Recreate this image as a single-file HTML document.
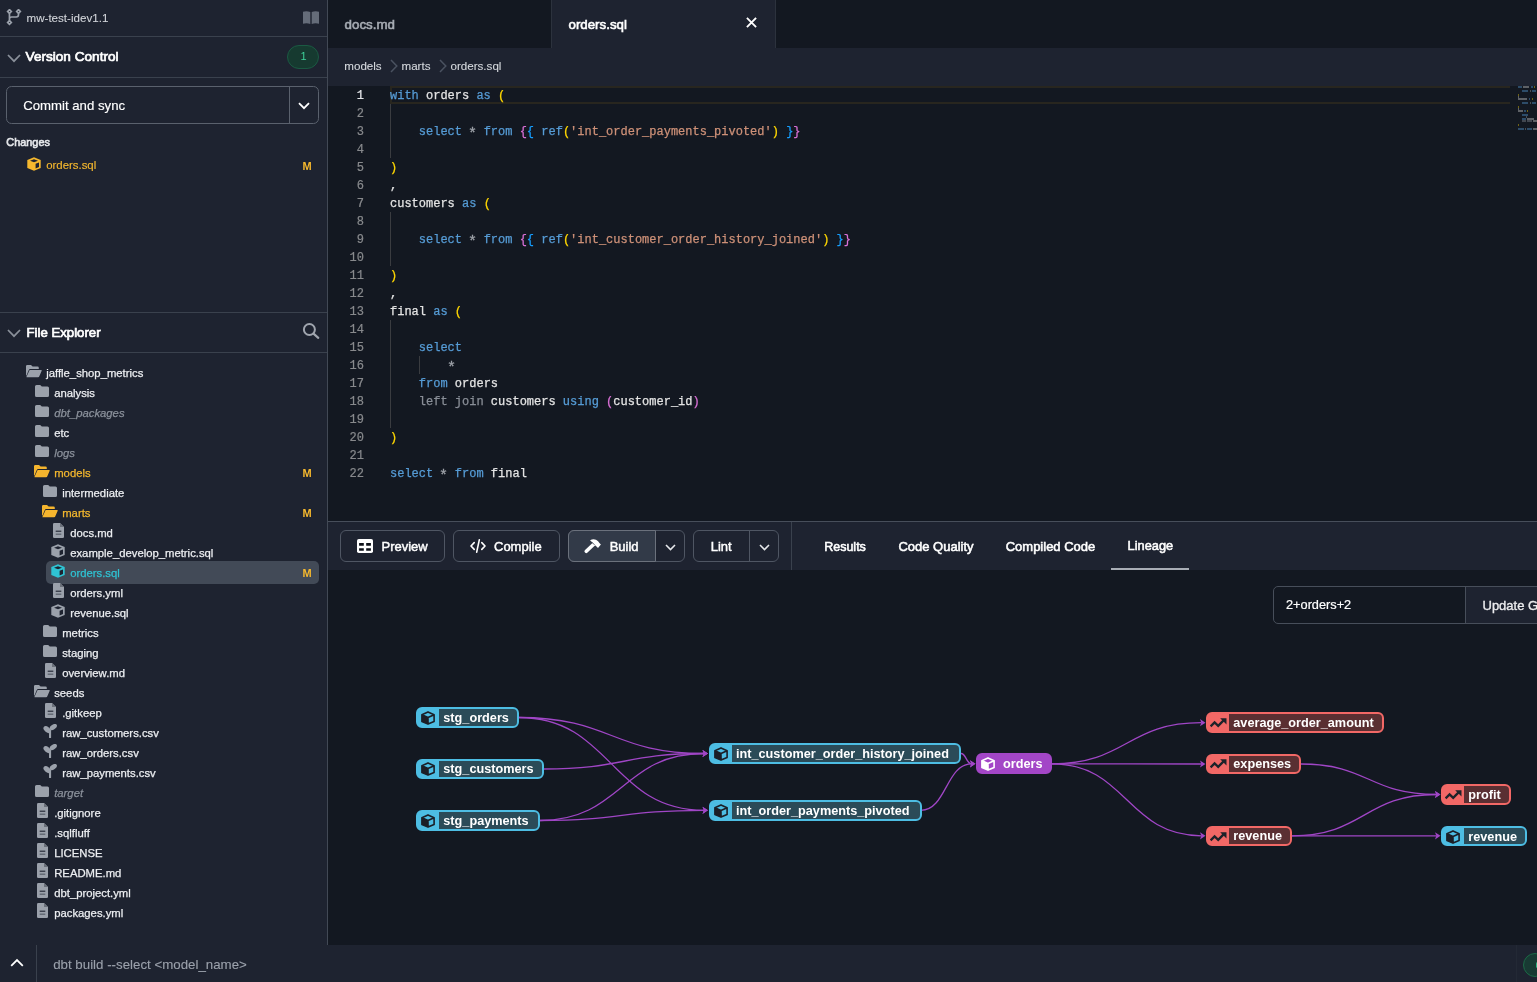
<!DOCTYPE html><html><head><meta charset="utf-8"><style>
*{box-sizing:border-box;margin:0;padding:0}
html,body{width:1537px;height:982px;overflow:hidden;background:#131821;font-family:"Liberation Sans",sans-serif;color:#e6e8eb}
.abs{position:absolute}
#root{position:absolute;left:0;top:0;width:1537px;height:982px;will-change:transform}
.t{position:absolute;white-space:nowrap;line-height:1}
.hline{position:absolute;height:1px;background:#3a414d}
.tr{font-size:12px}
.mk{font-size:11px;font-weight:bold;color:#f5b82e}
.ic{position:absolute;display:block}
.code{position:absolute;font-family:"Liberation Mono",monospace;font-size:12px;white-space:pre;line-height:1;-webkit-text-stroke:0.25px currentColor}
.code span{-webkit-text-stroke:0.25px currentColor}
.ast{display:inline-block;transform:translateY(2.6px) scale(1.25)}
.ln{position:absolute;font-family:"Liberation Mono",monospace;font-size:12px;line-height:1;text-align:right;width:30px;color:#858b94;-webkit-text-stroke:0.2px currentColor}
.k{color:#569cd6}.w{color:#e4e4e4}.y{color:#ffd700}.p{color:#da70d6}.b{color:#179fff}.s{color:#ce9178}.g{color:#8a8f98}.st{color:#a0a4ab}
.btn{position:absolute;border:1px solid #4d5461;border-radius:6px;background:#1e2330}
.node{position:absolute;height:21px;border-radius:6px;border:2.2px solid}
.node .nb{position:absolute;left:20.8px;top:0;bottom:0;right:0;border-radius:0 4px 4px 0}
.node .nt{position:absolute;left:25px;top:3px;font-size:12.7px;font-weight:bold;color:#fff;white-space:nowrap;line-height:1}
.node svg{position:absolute;left:2px;top:1px}
</style></head><body><div id="root">
<svg width="0" height="0" style="position:absolute">
<defs>
<symbol id="i-folder" viewBox="0 0 14 12"><path d="M1.5 0H5.2L6.8 1.6H12.5Q14 1.6 14 3.1V10.5Q14 12 12.5 12H1.5Q0 12 0 10.5V1.5Q0 0 1.5 0Z" fill="#9ba1ab"/></symbol>
<symbol id="i-fopen" viewBox="0 0 16 12.5"><path d="M1.3 0H5L6.6 1.5H11.5Q12.8 1.5 12.8 2.8V4H4.2Q3.2 4 2.8 4.9L0.6 10.2L0 10.8V1.3Q0 0 1.3 0Z M3.6 5H15.2Q16 5 15.7 5.8L13.2 11.6Q12.8 12.5 11.8 12.5H0.8Q0.2 12.5 0.5 11.8Z" fill="currentColor"/></symbol>
<symbol id="i-file" viewBox="0 0 11 15"><path d="M1.3 0H7L11 4V13.7Q11 15 9.7 15H1.3Q0 15 0 13.7V1.3Q0 0 1.3 0Z" fill="#9ba1ab"/><path d="M7 0V4H11" fill="#6b717b"/><path d="M2.7 8.2H8.3" stroke="#1e2330" stroke-width="1.1"/><path d="M2.7 11.2H8.3" stroke="#5d636e" stroke-width="1.3"/></symbol>
<symbol id="i-cube" viewBox="0 0 14 14"><path d="M7 0.3L13.7 2.9V11.1L7 13.7L0.3 11.1V2.9Z" fill="currentColor"/><path d="M7 2.2L11 3.7L7 5.2L3 3.7Z M8.6 6.7L12 5.4V10L8.6 11.4Z" fill="#1e2330"/></symbol>
<symbol id="i-seed" viewBox="0 0 14 14"><g fill="#9ba1ab"><ellipse cx="4.2" cy="5.6" rx="4.3" ry="2.6" transform="rotate(38 4.2 5.6)"/><ellipse cx="10.3" cy="3" rx="4" ry="2.4" transform="rotate(-34 10.3 3)"/><rect x="6" y="5.5" width="2.1" height="8.5" rx="0.6"/></g></symbol>
<symbol id="n-cube" viewBox="0 0 14 14"><path d="M1 3.7L7 6.4V13.1L1 10.4Z" fill="currentColor"/><path d="M7 0.9L13.1 3.7V10.4L7 13.1L0.9 10.4V3.7Z M0.9 3.7L7 6.4L13.1 3.7M7 6.4V13.1" fill="none" stroke="currentColor" stroke-width="1.6" stroke-linejoin="round"/></symbol>
<symbol id="n-metric" viewBox="0 0 17 10"><path d="M1.4 7.6L4.6 4.4L8.2 7.8L13 3" fill="none" stroke="#1e2229" stroke-width="2.3" stroke-linecap="square"/><path d="M10.2 0.3H16.5V6.6Z" fill="#1e2229"/></symbol>
</defs></svg>
<div class="abs" style="left:0;top:0;width:327px;height:945px;background:#1e2330"></div>
<div class="abs" style="left:327px;top:0;width:1px;height:945px;background:#424955"></div>
<svg class="abs" style="left:6px;top:9px" width="16" height="17" viewBox="0 0 16 17">
    <g fill="none" stroke="#9ba1ab" stroke-width="1.7">
      <path d="M3.45 0.7L5.3 2.5L3.45 4.3L1.65 2.5Z M12.5 0.7L14.3 2.5L12.5 4.3L10.7 2.5Z M3.45 11.7L5.3 13.5L3.45 15.3L1.65 13.5Z"/>
      <path d="M3.45 4.3V11.7M12.5 4.3V5.8Q12.5 8 10.3 8H5.6Q3.45 8 3.45 10.2"/>
    </g></svg>
<div class="t" style="left:26.5px;top:12.48px;font-size:11.6px;color:#d2d5da;-webkit-text-stroke:0.1px #d2d5da;">mw-test-idev1.1</div>
<svg class="abs" style="left:303px;top:11px" width="16" height="13" viewBox="0 0 16 13"><path d="M0 0.8Q3.5 -0.4 7.3 1V13Q3.5 11.6 0 12.8Z M8.7 1Q12.5 -0.4 16 0.8V12.8Q12.5 11.6 8.7 13Z" fill="#656c79"/></svg>
<div class="hline" style="left:0;top:36px;width:327px"></div>
<svg class="abs" style="left:7px;top:54px" width="14" height="9" viewBox="0 0 14 9"><path d="M1 1L7 7.2L13 1" fill="none" stroke="#8a909a" stroke-width="1.7"/></svg>
<div class="t" style="left:25.6px;top:50.29px;font-size:13.6px;color:#fff;-webkit-text-stroke:0.7px #fff;">Version Control</div>
<div class="abs" style="left:287px;top:45px;width:32px;height:24px;border-radius:12px;background:#163a30;border:1px solid #1b5a43"></div>
<div class="t" style="left:300.5px;top:51.49px;font-size:11px;color:#3ed19a;">1</div>
<div class="hline" style="left:0;top:77px;width:327px"></div>
<div class="abs" style="left:6px;top:86px;width:313px;height:38px;border:1px solid #5a616d;border-radius:5.5px"></div>
<div class="abs" style="left:289px;top:87px;width:1px;height:36px;background:#5a616d"></div>
<div class="t" style="left:23.2px;top:99.03px;font-size:13.2px;color:#fff;-webkit-text-stroke:0.15px #fff;">Commit and sync</div>
<svg class="abs" style="left:298px;top:102px" width="12" height="8" viewBox="0 0 12 8"><path d="M1 1.2L6 6.2L11 1.2" fill="none" stroke="#fff" stroke-width="1.8"/></svg>
<div class="t" style="left:6.3px;top:136.57px;font-size:10.9px;color:#e6e8eb;-webkit-text-stroke:0.6px #e6e8eb;">Changes</div>
<svg class="ic" style="left:27px;top:157px;color:#f5b82e" width="14" height="14"><use href="#i-cube"/></svg>
<div class="t" style="left:46.2px;top:160.15px;font-size:11.4px;color:#f5b82e;-webkit-text-stroke:0.15px #f5b82e;">orders.sql</div>
<div class="t" style="left:302.6px;top:160.59px;font-size:11px;color:#f5b82e;font-weight:bold;">M</div>
<div class="hline" style="left:0;top:312px;width:327px"></div>
<svg class="abs" style="left:7px;top:329px" width="14" height="9" viewBox="0 0 14 9"><path d="M1 1L7 7.2L13 1" fill="none" stroke="#8a909a" stroke-width="1.7"/></svg>
<div class="t" style="left:26.5px;top:325.63px;font-size:13.2px;color:#fff;-webkit-text-stroke:0.7px #fff;">File Explorer</div>
<svg class="abs" style="left:302px;top:322px" width="18" height="18" viewBox="0 0 18 18"><circle cx="7.4" cy="7.5" r="5.5" fill="none" stroke="#a0a5ae" stroke-width="2"/><path d="M11.5 11.6L16.3 15.9" stroke="#a0a5ae" stroke-width="2.1" stroke-linecap="round"/></svg>
<div class="hline" style="left:0;top:352px;width:327px"></div>
<svg class="ic" style="left:26px;top:365px;color:#9ba1ab" width="16" height="12.5"><use href="#i-fopen"/></svg>
<div class="t" style="left:46.2px;top:368.23px;font-size:11.3px;color:#eceef1;-webkit-text-stroke:0.25px #eceef1;">jaffle_shop_metrics</div>
<svg class="ic" style="left:35px;top:385px" width="14" height="12"><use href="#i-folder"/></svg>
<div class="t" style="left:54.2px;top:388.23px;font-size:11.3px;color:#eceef1;-webkit-text-stroke:0.25px #eceef1;">analysis</div>
<svg class="ic" style="left:35px;top:405px" width="14" height="12"><use href="#i-folder"/></svg>
<div class="t" style="left:54.2px;top:408.23px;font-size:11.3px;color:#8b919b;-webkit-text-stroke:0.25px #8b919b;font-style:italic;">dbt_packages</div>
<svg class="ic" style="left:35px;top:425px" width="14" height="12"><use href="#i-folder"/></svg>
<div class="t" style="left:54.2px;top:428.23px;font-size:11.3px;color:#eceef1;-webkit-text-stroke:0.25px #eceef1;">etc</div>
<svg class="ic" style="left:35px;top:445px" width="14" height="12"><use href="#i-folder"/></svg>
<div class="t" style="left:54.2px;top:448.23px;font-size:11.3px;color:#8b919b;-webkit-text-stroke:0.25px #8b919b;font-style:italic;">logs</div>
<svg class="ic" style="left:34px;top:465px;color:#f5b52e" width="16" height="12.5"><use href="#i-fopen"/></svg>
<div class="t" style="left:54.2px;top:468.23px;font-size:11.3px;color:#f5b82e;-webkit-text-stroke:0.25px #f5b82e;">models</div>
<div class="t" style="left:302.6px;top:468.49px;font-size:11px;color:#f5b82e;font-weight:bold;">M</div>
<svg class="ic" style="left:43px;top:485px" width="14" height="12"><use href="#i-folder"/></svg>
<div class="t" style="left:62.2px;top:488.23px;font-size:11.3px;color:#eceef1;-webkit-text-stroke:0.25px #eceef1;">intermediate</div>
<svg class="ic" style="left:42px;top:505px;color:#f5b52e" width="16" height="12.5"><use href="#i-fopen"/></svg>
<div class="t" style="left:62.2px;top:508.23px;font-size:11.3px;color:#f5b82e;-webkit-text-stroke:0.25px #f5b82e;">marts</div>
<div class="t" style="left:302.6px;top:508.49px;font-size:11px;color:#f5b82e;font-weight:bold;">M</div>
<svg class="ic" style="left:53px;top:523px" width="11" height="15"><use href="#i-file"/></svg>
<div class="t" style="left:70.2px;top:528.23px;font-size:11.3px;color:#eceef1;-webkit-text-stroke:0.25px #eceef1;">docs.md</div>
<svg class="ic" style="left:51px;top:544px;color:#9ba1ab" width="14" height="14"><use href="#i-cube"/></svg>
<div class="t" style="left:70.2px;top:548.23px;font-size:11.3px;color:#eceef1;-webkit-text-stroke:0.25px #eceef1;">example_develop_metric.sql</div>
<div class="abs" style="left:46px;top:561px;width:273px;height:22.5px;border-radius:5px;background:#424a57"></div>
<svg class="ic" style="left:51px;top:564px;color:#2fc3d3" width="14" height="14"><use href="#i-cube"/></svg>
<div class="t" style="left:70.2px;top:568.23px;font-size:11.3px;color:#2fc3d3;-webkit-text-stroke:0.25px #2fc3d3;">orders.sql</div>
<div class="t" style="left:302.6px;top:568.49px;font-size:11px;color:#f5b82e;font-weight:bold;">M</div>
<svg class="ic" style="left:53px;top:583px" width="11" height="15"><use href="#i-file"/></svg>
<div class="t" style="left:70.2px;top:588.23px;font-size:11.3px;color:#eceef1;-webkit-text-stroke:0.25px #eceef1;">orders.yml</div>
<svg class="ic" style="left:51px;top:604px;color:#9ba1ab" width="14" height="14"><use href="#i-cube"/></svg>
<div class="t" style="left:70.2px;top:608.23px;font-size:11.3px;color:#eceef1;-webkit-text-stroke:0.25px #eceef1;">revenue.sql</div>
<svg class="ic" style="left:43px;top:625px" width="14" height="12"><use href="#i-folder"/></svg>
<div class="t" style="left:62.2px;top:628.23px;font-size:11.3px;color:#eceef1;-webkit-text-stroke:0.25px #eceef1;">metrics</div>
<svg class="ic" style="left:43px;top:645px" width="14" height="12"><use href="#i-folder"/></svg>
<div class="t" style="left:62.2px;top:648.23px;font-size:11.3px;color:#eceef1;-webkit-text-stroke:0.25px #eceef1;">staging</div>
<svg class="ic" style="left:45px;top:663px" width="11" height="15"><use href="#i-file"/></svg>
<div class="t" style="left:62.2px;top:668.23px;font-size:11.3px;color:#eceef1;-webkit-text-stroke:0.25px #eceef1;">overview.md</div>
<svg class="ic" style="left:34px;top:685px;color:#9ba1ab" width="16" height="12.5"><use href="#i-fopen"/></svg>
<div class="t" style="left:54.2px;top:688.23px;font-size:11.3px;color:#eceef1;-webkit-text-stroke:0.25px #eceef1;">seeds</div>
<svg class="ic" style="left:45px;top:703px" width="11" height="15"><use href="#i-file"/></svg>
<div class="t" style="left:62.2px;top:708.23px;font-size:11.3px;color:#eceef1;-webkit-text-stroke:0.25px #eceef1;">.gitkeep</div>
<svg class="ic" style="left:43px;top:724px" width="14" height="14"><use href="#i-seed"/></svg>
<div class="t" style="left:62.2px;top:728.23px;font-size:11.3px;color:#eceef1;-webkit-text-stroke:0.25px #eceef1;">raw_customers.csv</div>
<svg class="ic" style="left:43px;top:744px" width="14" height="14"><use href="#i-seed"/></svg>
<div class="t" style="left:62.2px;top:748.23px;font-size:11.3px;color:#eceef1;-webkit-text-stroke:0.25px #eceef1;">raw_orders.csv</div>
<svg class="ic" style="left:43px;top:764px" width="14" height="14"><use href="#i-seed"/></svg>
<div class="t" style="left:62.2px;top:768.23px;font-size:11.3px;color:#eceef1;-webkit-text-stroke:0.25px #eceef1;">raw_payments.csv</div>
<svg class="ic" style="left:35px;top:785px" width="14" height="12"><use href="#i-folder"/></svg>
<div class="t" style="left:54.2px;top:788.23px;font-size:11.3px;color:#8b919b;-webkit-text-stroke:0.25px #8b919b;font-style:italic;">target</div>
<svg class="ic" style="left:37px;top:803px" width="11" height="15"><use href="#i-file"/></svg>
<div class="t" style="left:54.2px;top:808.23px;font-size:11.3px;color:#eceef1;-webkit-text-stroke:0.25px #eceef1;">.gitignore</div>
<svg class="ic" style="left:37px;top:823px" width="11" height="15"><use href="#i-file"/></svg>
<div class="t" style="left:54.2px;top:828.23px;font-size:11.3px;color:#eceef1;-webkit-text-stroke:0.25px #eceef1;">.sqlfluff</div>
<svg class="ic" style="left:37px;top:843px" width="11" height="15"><use href="#i-file"/></svg>
<div class="t" style="left:54.2px;top:848.23px;font-size:11.3px;color:#eceef1;-webkit-text-stroke:0.25px #eceef1;">LICENSE</div>
<svg class="ic" style="left:37px;top:863px" width="11" height="15"><use href="#i-file"/></svg>
<div class="t" style="left:54.2px;top:868.23px;font-size:11.3px;color:#eceef1;-webkit-text-stroke:0.25px #eceef1;">README.md</div>
<svg class="ic" style="left:37px;top:883px" width="11" height="15"><use href="#i-file"/></svg>
<div class="t" style="left:54.2px;top:888.23px;font-size:11.3px;color:#eceef1;-webkit-text-stroke:0.25px #eceef1;">dbt_project.yml</div>
<svg class="ic" style="left:37px;top:903px" width="11" height="15"><use href="#i-file"/></svg>
<div class="t" style="left:54.2px;top:908.23px;font-size:11.3px;color:#eceef1;-webkit-text-stroke:0.25px #eceef1;">packages.yml</div>
<div class="abs" style="left:328px;top:0;width:1209px;height:48px;background:#131821"></div>
<div class="t" style="left:344.6px;top:17.64px;font-size:13.3px;color:#a6abb3;-webkit-text-stroke:0.6px #a6abb3;">docs.md</div>
<div class="abs" style="left:551px;top:0;width:225px;height:48px;background:#1e2330;border-left:1px solid #2c323d;border-right:1px solid #2c323d"></div>
<div class="t" style="left:568.5px;top:17.64px;font-size:13.3px;color:#ffffff;-webkit-text-stroke:0.6px #ffffff;">orders.sql</div>
<svg class="abs" style="left:745.5px;top:16.5px" width="11" height="11" viewBox="0 0 11 11"><path d="M1.6 1.6L9.4 9.4M9.4 1.6L1.6 9.4" stroke="#fff" stroke-width="1.9" stroke-linecap="square"/></svg>
<div class="abs" style="left:328px;top:48px;width:1209px;height:37.5px;background:#1e2330"></div>
<div class="t" style="left:344.3px;top:60.08px;font-size:11.6px;color:#d5d8dd;-webkit-text-stroke:0.1px #d5d8dd;">models</div>
<svg class="abs" style="left:390px;top:59px" width="8" height="14" viewBox="0 0 8 14"><path d="M1 1L6.8 7L1 13" fill="none" stroke="#4a5260" stroke-width="1.5"/></svg>
<div class="t" style="left:401.5px;top:60.08px;font-size:11.6px;color:#d5d8dd;-webkit-text-stroke:0.1px #d5d8dd;">marts</div>
<svg class="abs" style="left:439px;top:59px" width="8" height="14" viewBox="0 0 8 14"><path d="M1 1L6.8 7L1 13" fill="none" stroke="#4a5260" stroke-width="1.5"/></svg>
<div class="t" style="left:450.5px;top:60.08px;font-size:11.6px;color:#d5d8dd;-webkit-text-stroke:0.1px #d5d8dd;">orders.sql</div>
<div class="abs" style="left:390px;top:86px;width:1120px;height:18px;border-top:2px solid #28261f;border-bottom:2px solid #28261f;border-left:2px solid #28261f"></div>
<div class="abs" style="left:390px;top:104px;width:1px;height:54px;background:#3a3c40"></div>
<div class="abs" style="left:390px;top:212px;width:1px;height:54px;background:#3a3c40"></div>
<div class="abs" style="left:390px;top:320px;width:1px;height:108px;background:#3a3c40"></div>
<div class="abs" style="left:419px;top:356px;width:1px;height:18px;background:#3a3c40"></div>
<div class="ln" style="left:334px;top:90px;color:#e6e8eb">1</div>
<div class="code" style="left:390px;top:90px"><span class="k">with</span><span class="w"> orders </span><span class="k">as</span><span class="w"> </span><span class="y">(</span></div>
<div class="ln" style="left:334px;top:108px;color:#888a8d">2</div>
<div class="ln" style="left:334px;top:126px;color:#888a8d">3</div>
<div class="code" style="left:390px;top:126px"><span class="w">    </span><span class="k">select</span><span class="st"> <i class="ast" style="font-style:normal">*</i> </span><span class="k">from</span><span class="w"> </span><span class="p">{</span><span class="b">{</span><span class="w"> </span><span class="k">ref</span><span class="y">(</span><span class="s">&#x27;int_order_payments_pivoted&#x27;</span><span class="y">)</span><span class="w"> </span><span class="b">}</span><span class="p">}</span></div>
<div class="ln" style="left:334px;top:144px;color:#888a8d">4</div>
<div class="ln" style="left:334px;top:162px;color:#888a8d">5</div>
<div class="code" style="left:390px;top:162px"><span class="y">)</span></div>
<div class="ln" style="left:334px;top:180px;color:#888a8d">6</div>
<div class="code" style="left:390px;top:180px"><span class="w">,</span></div>
<div class="ln" style="left:334px;top:198px;color:#888a8d">7</div>
<div class="code" style="left:390px;top:198px"><span class="w">customers </span><span class="k">as</span><span class="w"> </span><span class="y">(</span></div>
<div class="ln" style="left:334px;top:216px;color:#888a8d">8</div>
<div class="ln" style="left:334px;top:234px;color:#888a8d">9</div>
<div class="code" style="left:390px;top:234px"><span class="w">    </span><span class="k">select</span><span class="st"> <i class="ast" style="font-style:normal">*</i> </span><span class="k">from</span><span class="w"> </span><span class="p">{</span><span class="b">{</span><span class="w"> </span><span class="k">ref</span><span class="y">(</span><span class="s">&#x27;int_customer_order_history_joined&#x27;</span><span class="y">)</span><span class="w"> </span><span class="b">}</span><span class="p">}</span></div>
<div class="ln" style="left:334px;top:252px;color:#888a8d">10</div>
<div class="ln" style="left:334px;top:270px;color:#888a8d">11</div>
<div class="code" style="left:390px;top:270px"><span class="y">)</span></div>
<div class="ln" style="left:334px;top:288px;color:#888a8d">12</div>
<div class="code" style="left:390px;top:288px"><span class="w">,</span></div>
<div class="ln" style="left:334px;top:306px;color:#888a8d">13</div>
<div class="code" style="left:390px;top:306px"><span class="w">final </span><span class="k">as</span><span class="w"> </span><span class="y">(</span></div>
<div class="ln" style="left:334px;top:324px;color:#888a8d">14</div>
<div class="ln" style="left:334px;top:342px;color:#888a8d">15</div>
<div class="code" style="left:390px;top:342px"><span class="w">    </span><span class="k">select</span></div>
<div class="ln" style="left:334px;top:360px;color:#888a8d">16</div>
<div class="code" style="left:390px;top:360px"><span class="w">        </span><span class="st"><i class="ast" style="font-style:normal">*</i></span></div>
<div class="ln" style="left:334px;top:378px;color:#888a8d">17</div>
<div class="code" style="left:390px;top:378px"><span class="w">    </span><span class="k">from</span><span class="w"> orders</span></div>
<div class="ln" style="left:334px;top:396px;color:#888a8d">18</div>
<div class="code" style="left:390px;top:396px"><span class="w">    </span><span class="g">left join</span><span class="w"> customers </span><span class="k">using</span><span class="w"> </span><span class="p">(</span><span class="w">customer_id</span><span class="p">)</span></div>
<div class="ln" style="left:334px;top:414px;color:#888a8d">19</div>
<div class="ln" style="left:334px;top:432px;color:#888a8d">20</div>
<div class="code" style="left:390px;top:432px"><span class="y">)</span></div>
<div class="ln" style="left:334px;top:450px;color:#888a8d">21</div>
<div class="ln" style="left:334px;top:468px;color:#888a8d">22</div>
<div class="code" style="left:390px;top:468px"><span class="k">select</span><span class="st"> <i class="ast" style="font-style:normal">*</i> </span><span class="k">from</span><span class="w"> final</span></div>
<div class="abs" style="left:1517.80px;top:86px;width:4.08px;height:1.6px;background:#569cd6;opacity:.4"></div>
<div class="abs" style="left:1523.15px;top:86px;width:6.22px;height:1.6px;background:#d0d0d0;opacity:.4"></div>
<div class="abs" style="left:1530.64px;top:86px;width:1.94px;height:1.6px;background:#569cd6;opacity:.4"></div>
<div class="abs" style="left:1533.85px;top:86px;width:0.87px;height:1.6px;background:#ffd700;opacity:.4"></div>
<div class="abs" style="left:1522.08px;top:90px;width:6.22px;height:1.6px;background:#569cd6;opacity:.4"></div>
<div class="abs" style="left:1529.57px;top:90px;width:0.87px;height:1.6px;background:#a0a4ab;opacity:.4"></div>
<div class="abs" style="left:1531.71px;top:90px;width:4.08px;height:1.6px;background:#569cd6;opacity:.4"></div>
<div class="abs" style="left:1517.80px;top:94px;width:0.87px;height:1.6px;background:#ffd700;opacity:.4"></div>
<div class="abs" style="left:1517.80px;top:96px;width:0.87px;height:1.6px;background:#d0d0d0;opacity:.4"></div>
<div class="abs" style="left:1517.80px;top:98px;width:9.43px;height:1.6px;background:#d0d0d0;opacity:.4"></div>
<div class="abs" style="left:1528.50px;top:98px;width:1.94px;height:1.6px;background:#569cd6;opacity:.4"></div>
<div class="abs" style="left:1531.71px;top:98px;width:0.87px;height:1.6px;background:#ffd700;opacity:.4"></div>
<div class="abs" style="left:1522.08px;top:102px;width:6.22px;height:1.6px;background:#569cd6;opacity:.4"></div>
<div class="abs" style="left:1529.57px;top:102px;width:0.87px;height:1.6px;background:#a0a4ab;opacity:.4"></div>
<div class="abs" style="left:1531.71px;top:102px;width:4.08px;height:1.6px;background:#569cd6;opacity:.4"></div>
<div class="abs" style="left:1517.80px;top:106px;width:0.87px;height:1.6px;background:#ffd700;opacity:.4"></div>
<div class="abs" style="left:1517.80px;top:108px;width:0.87px;height:1.6px;background:#d0d0d0;opacity:.4"></div>
<div class="abs" style="left:1517.80px;top:110px;width:5.15px;height:1.6px;background:#d0d0d0;opacity:.4"></div>
<div class="abs" style="left:1524.22px;top:110px;width:1.94px;height:1.6px;background:#569cd6;opacity:.4"></div>
<div class="abs" style="left:1527.43px;top:110px;width:0.87px;height:1.6px;background:#ffd700;opacity:.4"></div>
<div class="abs" style="left:1522.08px;top:114px;width:6.22px;height:1.6px;background:#569cd6;opacity:.4"></div>
<div class="abs" style="left:1526.36px;top:116px;width:0.87px;height:1.6px;background:#a0a4ab;opacity:.4"></div>
<div class="abs" style="left:1522.08px;top:118px;width:4.08px;height:1.6px;background:#569cd6;opacity:.4"></div>
<div class="abs" style="left:1527.43px;top:118px;width:6.22px;height:1.6px;background:#d0d0d0;opacity:.4"></div>
<div class="abs" style="left:1522.08px;top:120px;width:4.08px;height:1.6px;background:#8a8f98;opacity:.4"></div>
<div class="abs" style="left:1527.43px;top:120px;width:4.08px;height:1.6px;background:#8a8f98;opacity:.4"></div>
<div class="abs" style="left:1532.78px;top:120px;width:9.43px;height:1.6px;background:#d0d0d0;opacity:.4"></div>
<div class="abs" style="left:1517.80px;top:124px;width:0.87px;height:1.6px;background:#ffd700;opacity:.4"></div>
<div class="abs" style="left:1517.80px;top:128px;width:6.22px;height:1.6px;background:#569cd6;opacity:.4"></div>
<div class="abs" style="left:1525.29px;top:128px;width:0.87px;height:1.6px;background:#a0a4ab;opacity:.4"></div>
<div class="abs" style="left:1527.43px;top:128px;width:4.08px;height:1.6px;background:#569cd6;opacity:.4"></div>
<div class="abs" style="left:1532.78px;top:128px;width:5.15px;height:1.6px;background:#d0d0d0;opacity:.4"></div>
<div class="abs" style="left:328px;top:521px;width:1209px;height:1px;background:#474e5a"></div>
<div class="abs" style="left:328px;top:522px;width:1209px;height:48px;background:#1e2330"></div>
<div class="btn" style="left:340px;top:530px;width:105px;height:32px;border-color:#4f5663"></div>
<svg class="abs" style="left:357px;top:539px" width="16" height="14" viewBox="0 0 16 14"><rect x="0" y="0" width="16" height="14" rx="1.8" fill="#fff"/><path d="M2.1 4.1H6.8V6.7H2.1Z M9.2 4.1H13.9V6.7H9.2Z M2.1 9.2H6.8V11.8H2.1Z M9.2 9.2H13.9V11.8H9.2Z" fill="#0d1118"/></svg>
<div class="t" style="left:381.5px;top:540.00px;font-size:13px;color:#fff;-webkit-text-stroke:0.45px #fff;">Preview</div>
<div class="btn" style="left:453px;top:530px;width:107px;height:32px;border-color:#4f5663"></div>
<svg class="abs" style="left:470px;top:539px" width="16" height="14" viewBox="0 0 16 14"><path d="M4.2 3.6L1 7L4.2 10.4M11.8 3.6L15 7L11.8 10.4M9.3 0.8L6.7 13.2" fill="none" stroke="#fff" stroke-width="1.6" stroke-linecap="round" stroke-linejoin="round"/></svg>
<div class="t" style="left:494px;top:540.00px;font-size:13px;color:#fff;-webkit-text-stroke:0.45px #fff;">Compile</div>
<div class="btn" style="left:568px;top:530px;width:117px;height:32px;border-color:#4f5663"></div>
<div class="abs" style="left:568px;top:530px;width:88px;height:32px;background:#323a48;border:1px solid #6b717c;border-radius:6px 0 0 6px"></div>
<svg class="abs" style="left:584px;top:538px" width="18" height="17" viewBox="0 0 18 17"><path d="M2.3 13.3L9.2 6.8" stroke="#fff" stroke-width="3.6" stroke-linecap="round"/><path d="M6 2.3Q9 0.7 12 1.7Q14.5 2.9 15.4 5L16.9 6.6L14 10L12.2 8.3L10.3 6.4L8.4 4.5Z" fill="#fff"/><path d="M8.2 4.3L10.6 7" stroke="#323a48" stroke-width="0.7"/></svg>
<div class="t" style="left:609.7px;top:540.00px;font-size:13px;color:#fff;-webkit-text-stroke:0.45px #fff;">Build</div>
<svg class="abs" style="left:664.5px;top:543.5px" width="11" height="7" viewBox="0 0 11 7"><path d="M1 1L5.5 5.5L10 1" fill="none" stroke="#e6e8eb" stroke-width="1.6"/></svg>
<div class="btn" style="left:693px;top:530px;width:86px;height:32px;border-color:#4f5663"></div>
<div class="abs" style="left:749px;top:531px;width:1px;height:30px;background:#4f5663"></div>
<div class="t" style="left:710.7px;top:540.00px;font-size:13px;color:#fff;-webkit-text-stroke:0.45px #fff;">Lint</div>
<svg class="abs" style="left:758.5px;top:543.5px" width="11" height="7" viewBox="0 0 11 7"><path d="M1 1L5.5 5.5L10 1" fill="none" stroke="#e6e8eb" stroke-width="1.6"/></svg>
<div class="abs" style="left:791px;top:522px;width:1px;height:48px;background:#3a414d"></div>
<div class="t" style="left:824.2px;top:540.67px;font-size:12.5px;color:#fff;-webkit-text-stroke:0.55px #fff;">Results</div>
<div class="t" style="left:898.4px;top:540.25px;font-size:13px;color:#fff;-webkit-text-stroke:0.55px #fff;">Code Quality</div>
<div class="t" style="left:1005.7px;top:540.25px;font-size:13px;color:#fff;-webkit-text-stroke:0.55px #fff;">Compiled Code</div>
<div class="t" style="left:1127.6px;top:540.06px;font-size:12.8px;color:#fff;-webkit-text-stroke:0.55px #fff;">Lineage</div>
<div class="abs" style="left:1111px;top:567.5px;width:78px;height:2.5px;background:#a8adb5"></div>
<div class="abs" style="left:1273px;top:586px;width:280px;height:38px;border:1px solid #474e5a;border-radius:5px;background:#131821"></div>
<div class="abs" style="left:1465px;top:587px;width:72px;height:36px;background:#1e2330;border-left:1px solid #474e5a"></div>
<div class="t" style="left:1286px;top:599.21px;font-size:12.75px;color:#fff;-webkit-text-stroke:0.2px #fff;">2+orders+2</div>
<div class="t" style="left:1482.5px;top:599.00px;font-size:13px;color:#ececee;-webkit-text-stroke:0.35px #ececee;">Update G</div>
<svg class="abs" style="left:0;top:0" width="1537" height="982" viewBox="0 0 1537 982"><path d="M519 717.5C611.5 717.5 611.5 753.5 704 753.5" fill="none" stroke="#a046c6" stroke-width="1.3"/><path d="M708 753.5L702.5 749.9L703.8 753.5L702.5 757.1Z" fill="#a046c6"/><path d="M519 717.5C611.5 717.5 611.5 810.3 704 810.3" fill="none" stroke="#a046c6" stroke-width="1.3"/><path d="M708 810.3L702.5 806.6999999999999L703.8 810.3L702.5 813.9Z" fill="#a046c6"/><path d="M544 769C624.0 769 624.0 753.5 704 753.5" fill="none" stroke="#a046c6" stroke-width="1.3"/><path d="M708 753.5L702.5 749.9L703.8 753.5L702.5 757.1Z" fill="#a046c6"/><path d="M540 820.5C622.0 820.5 622.0 753.5 704 753.5" fill="none" stroke="#a046c6" stroke-width="1.3"/><path d="M708 753.5L702.5 749.9L703.8 753.5L702.5 757.1Z" fill="#a046c6"/><path d="M540 820.5C622.0 820.5 622.0 810.3 704 810.3" fill="none" stroke="#a046c6" stroke-width="1.3"/><path d="M708 810.3L702.5 806.6999999999999L703.8 810.3L702.5 813.9Z" fill="#a046c6"/><path d="M961 753.5C966.2 753.5 966.2 763.8 971.5 763.8" fill="none" stroke="#a046c6" stroke-width="1.3"/><path d="M975.5 763.8L970.0 760.1999999999999L971.3 763.8L970.0 767.4Z" fill="#a046c6"/><path d="M921 810.3C946.2 810.3 946.2 763.8 971.5 763.8" fill="none" stroke="#a046c6" stroke-width="1.3"/><path d="M975.5 763.8L970.0 760.1999999999999L971.3 763.8L970.0 767.4Z" fill="#a046c6"/><path d="M1052 763.8C1126.8 763.8 1126.8 722.7 1201.5 722.7" fill="none" stroke="#a046c6" stroke-width="1.3"/><path d="M1205.5 722.7L1200.0 719.1L1201.3 722.7L1200.0 726.3000000000001Z" fill="#a046c6"/><path d="M1052 763.8C1126.8 763.8 1126.8 764 1201.5 764" fill="none" stroke="#a046c6" stroke-width="1.3"/><path d="M1205.5 764L1200.0 760.4L1201.3 764L1200.0 767.6Z" fill="#a046c6"/><path d="M1052 763.8C1126.8 763.8 1126.8 835.8 1201.5 835.8" fill="none" stroke="#a046c6" stroke-width="1.3"/><path d="M1205.5 835.8L1200.0 832.1999999999999L1201.3 835.8L1200.0 839.4Z" fill="#a046c6"/><path d="M1301 764C1368.8 764 1368.8 794.5 1436.5 794.5" fill="none" stroke="#a046c6" stroke-width="1.3"/><path d="M1440.5 794.5L1435.0 790.9L1436.3 794.5L1435.0 798.1Z" fill="#a046c6"/><path d="M1292 835.8C1364.2 835.8 1364.2 794.5 1436.5 794.5" fill="none" stroke="#a046c6" stroke-width="1.3"/><path d="M1440.5 794.5L1435.0 790.9L1436.3 794.5L1435.0 798.1Z" fill="#a046c6"/><path d="M1292 835.8C1364.2 835.8 1364.2 835.8 1436.5 835.8" fill="none" stroke="#a046c6" stroke-width="1.3"/><path d="M1440.5 835.8L1435.0 832.1999999999999L1436.3 835.8L1435.0 839.4Z" fill="#a046c6"/></svg>
<div class="node" style="left:416.3px;top:707px;width:103px;height:20.5px;border-color:#4dbde3;background:#4dbde3"><div class="nb" style="background:#2b4b58"></div><svg width="14" height="14" style="color:#1b1f27;left:3.2px;top:1.8px"><use href="#n-cube"/></svg>
<div class="nt" style="top:2.65px;left:25px">stg_orders</div></div>
<div class="node" style="left:416.3px;top:758.6px;width:128px;height:20.5px;border-color:#4dbde3;background:#4dbde3"><div class="nb" style="background:#2b4b58"></div><svg width="14" height="14" style="color:#1b1f27;left:3.2px;top:1.8px"><use href="#n-cube"/></svg>
<div class="nt" style="top:2.65px;left:25px">stg_customers</div></div>
<div class="node" style="left:416.3px;top:810.2px;width:124px;height:20.8px;border-color:#4dbde3;background:#4dbde3"><div class="nb" style="background:#2b4b58"></div><svg width="14" height="14" style="color:#1b1f27;left:3.2px;top:1.8px"><use href="#n-cube"/></svg>
<div class="nt" style="top:2.65px;left:25px">stg_payments</div></div>
<div class="node" style="left:709px;top:743px;width:252px;height:21px;border-color:#4dbde3;background:#4dbde3"><div class="nb" style="background:#2b4b58"></div><svg width="14" height="14" style="color:#1b1f27;left:3.2px;top:1.8px"><use href="#n-cube"/></svg>
<div class="nt" style="top:2.65px;left:25px">int_customer_order_history_joined</div></div>
<div class="node" style="left:709px;top:800px;width:212.5px;height:20.8px;border-color:#4dbde3;background:#4dbde3"><div class="nb" style="background:#2b4b58"></div><svg width="14" height="14" style="color:#1b1f27;left:3.2px;top:1.8px"><use href="#n-cube"/></svg>
<div class="nt" style="top:2.65px;left:25px">int_order_payments_pivoted</div></div>
<div class="node" style="left:976px;top:753.3px;width:76px;height:20.8px;border-color:#a346c7;background:#a346c7"><svg width="14" height="14" style="color:#fff;left:3px;top:1.8px"><use href="#n-cube"/></svg>
<div class="nt" style="top:2.25px;left:25px">orders</div></div>
<div class="node" style="left:1206.3px;top:712.4px;width:178.2px;height:20.5px;border-color:#f26866;background:#f26866"><div class="nb" style="background:#5a2f32"></div><svg width="17" height="10" style="left:1.6px;top:3.8px"><use href="#n-metric"/></svg>
<div class="nt" style="top:2.65px;left:25px">average_order_amount</div></div>
<div class="node" style="left:1206.3px;top:753.5px;width:94.7px;height:20.6px;border-color:#f26866;background:#f26866"><div class="nb" style="background:#5a2f32"></div><svg width="17" height="10" style="left:1.6px;top:3.8px"><use href="#n-metric"/></svg>
<div class="nt" style="top:2.65px;left:25px">expenses</div></div>
<div class="node" style="left:1206.3px;top:825.8px;width:85.6px;height:20.4px;border-color:#f26866;background:#f26866"><div class="nb" style="background:#5a2f32"></div><svg width="17" height="10" style="left:1.6px;top:3.8px"><use href="#n-metric"/></svg>
<div class="nt" style="top:2.65px;left:25px">revenue</div></div>
<div class="node" style="left:1441.3px;top:784.4px;width:70.2px;height:20.6px;border-color:#f26866;background:#f26866"><div class="nb" style="background:#5a2f32"></div><svg width="17" height="10" style="left:1.6px;top:3.8px"><use href="#n-metric"/></svg>
<div class="nt" style="top:2.65px;left:25px">profit</div></div>
<div class="node" style="left:1441.3px;top:825.9px;width:85.7px;height:20.2px;border-color:#4dbde3;background:#4dbde3"><div class="nb" style="background:#2b4b58"></div><svg width="14" height="14" style="color:#1b1f27;left:3.2px;top:1.8px"><use href="#n-cube"/></svg>
<div class="nt" style="top:2.65px;left:25px">revenue</div></div>
<div class="abs" style="left:0;top:945px;width:1537px;height:37px;background:#1e2330"></div>
<svg class="abs" style="left:9.5px;top:957.5px" width="14" height="9" viewBox="0 0 14 9"><path d="M1.2 7.8L7 2L12.8 7.8" fill="none" stroke="#fff" stroke-width="1.8"/></svg>
<div class="abs" style="left:36px;top:945px;width:1px;height:37px;background:#3a414d"></div>
<div class="t" style="left:53.2px;top:957.94px;font-size:13.3px;color:#9ba1ab;-webkit-text-stroke:0.1px #9ba1ab;">dbt build --select &lt;model_name&gt;</div>
<div class="abs" style="left:1515.5px;top:945px;width:1px;height:37px;background:#232935"></div>
<div class="abs" style="left:1523px;top:953px;width:24px;height:24px;border-radius:12px;background:#183a33;border:1.2px solid #1c6a47"></div>
<div class="abs" style="left:1535.7px;top:962px;width:3px;height:6px;border-radius:1.5px;background:#2fb57f"></div>
</div></body></html>
